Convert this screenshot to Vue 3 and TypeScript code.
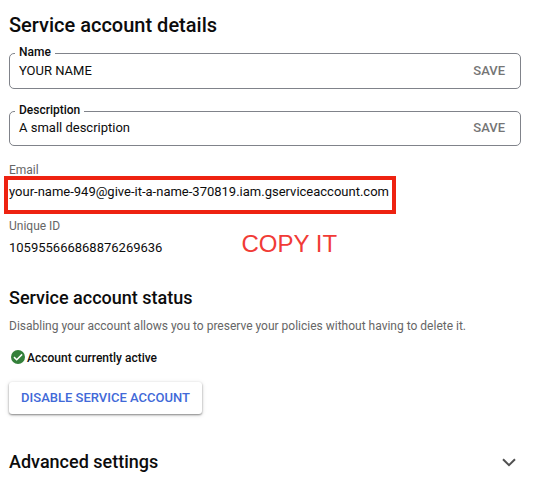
<script setup lang="ts">
import { ref } from 'vue'

interface Field {
  id: string
  label: string
  value: string
}

const fields = ref<Field[]>([
  { id: 'name', label: 'Name', value: 'YOUR NAME' },
  { id: 'description', label: 'Description', value: 'A small description' },
])
const email = 'your-name-949@give-it-a-name-370819.iam.gserviceaccount.com'
const uniqueId = '105955666868876269636'
</script>

<template>
  <main class="page">
    <h1 class="title">Service account details</h1>

    <div v-for="field in fields" :key="field.id" class="field" :class="field.id">
      <span class="field-label">{{ field.label }}</span>
      <span class="field-value">{{ field.value }}</span>
      <button class="save" type="button">SAVE</button>
    </div>

    <div class="label">Email</div>
    <div class="value email">
      <span class="email-text">{{ email }}</span>
      <span class="highlight"></span>
    </div>

    <div class="label unique">Unique ID</div>
    <div class="value id">
      <span class="id-text">{{ uniqueId }}</span>
      <span class="note">COPY IT</span>
    </div>

    <h2 class="subtitle status">Service account status</h2>
    <p class="hint">Disabling your account allows you to preserve your policies without having to delete it.</p>

    <div class="active">
      <svg class="check" viewBox="0 0 14 14" width="14" height="14">
        <circle cx="7" cy="7" r="7" fill="#34803a" />
        <path d="M3 7.1 5.7 9.8 11.1 4.4" fill="none" stroke="#fff" stroke-width="1.5" />
      </svg>
      <span class="active-text">Account currently active</span>
    </div>

    <button class="disable" type="button"><span class="disable-text">DISABLE SERVICE ACCOUNT</span></button>

    <div class="advanced">
      <h2 class="subtitle adv">Advanced settings</h2>
      <svg class="chevron" viewBox="0 0 14 9" width="14" height="9">
        <path d="M1 1.2 7 7.2 13 1.2" fill="none" stroke="#505050" stroke-width="2" />
      </svg>
    </div>
  </main>
</template>

<style>
body {
  background: #fff;
}
</style>

<style scoped>
.page {
  box-sizing: border-box;
  width: 559px;
  height: 496px;
  padding: 13px 38px 0 9px;
  overflow: hidden;
  background: #fff;
  color: #0c0c0c;
  font-family: Roboto, "Liberation Sans", sans-serif;
  font-size: 13px;
  line-height: 16px;
}
h1,
h2,
p {
  margin: 0;
}
button {
  border: 0;
  background: none;
  font: inherit;
}
.title {
  font-size: 20px;
  font-weight: 500;
  line-height: 24px;
}
.field {
  position: relative;
  display: flex;
  align-items: center;
  justify-content: space-between;
  box-sizing: border-box;
  height: 36px;
  margin-top: 16px;
  padding: 0 15px 0 9px;
  border: 1px solid #80838a;
  border-radius: 5px;
}
.description {
  height: 35px;
  margin-top: 22px;
  padding-bottom: 1px;
}
.field-label {
  position: absolute;
  top: -10px;
  left: 5px;
  padding: 0 4px;
  background: #fff;
  font-size: 12px;
  font-weight: 500;
}
.save {
  padding: 0;
  color: #757575;
  font-weight: 500;
}
.label {
  margin-top: 16px;
  color: #666;
  font-size: 12px;
}
.email {
  position: relative;
  margin-top: 6px;
}
.highlight {
  position: absolute;
  top: -8px;
  left: -5px;
  box-sizing: border-box;
  width: 392px;
  height: 38px;
  border: 4px solid #ee2211;
}
.unique {
  margin-top: 18px;
}
.id {
  display: flex;
  align-items: center;
  height: 16px;
  margin-top: 6px;
}
.id-text {
  width: 232.5px;
}
.note {
  margin-top: -9px;
  color: #f13b36;
  font-family: "Liberation Sans", sans-serif;
  font-size: 24px;
  line-height: 28px;
}
.subtitle {
  font-size: 18px;
  font-weight: 500;
  line-height: 24px;
}
.status {
  margin-top: 30px;
}
.hint {
  margin-top: 8px;
  color: #666;
  font-size: 12px;
  white-space: nowrap;
}
.active {
  display: flex;
  align-items: center;
  gap: 2px;
  height: 16px;
  margin-top: 15px;
  padding-left: 2px;
  font-size: 12px;
  font-weight: 500;
}
.active-text {
  padding-top: 2px;
}
.disable {
  display: block;
  width: 193px;
  height: 32px;
  margin-top: 17px;
  padding: 0;
  border-radius: 3px;
  box-shadow: 0 1px 2px rgba(0, 0, 0, 0.42), 0 1px 5px rgba(0, 0, 0, 0.14);
  color: #4169d8;
  font-weight: 500;
}
.advanced {
  display: flex;
  align-items: center;
  justify-content: space-between;
  margin-top: 36px;
  padding-right: 5px;
}
</style>
